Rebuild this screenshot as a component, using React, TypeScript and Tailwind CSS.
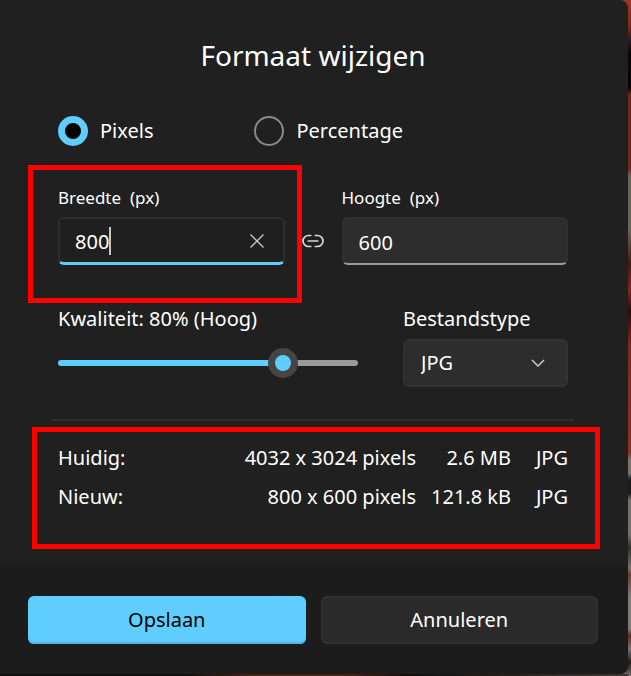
import { useState, type CSSProperties } from "react";

type Unit = "pixels" | "percentage";

const rows = [
  { label: "Huidig:", size: "4032 x 3024 pixels", weight: "2.6 MB", type: "JPG" },
  { label: "Nieuw:", size: "800 x 600 pixels", weight: "121.8 kB", type: "JPG" },
];

const QUALITY_MIN = 10;

function UnitRadio({ label, checked, onChange }: { label: string; checked: boolean; onChange: () => void }) {
  return (
    <label className="flex items-center gap-3 text-xl leading-[30px]">
      <input
        type="radio"
        name="unit"
        checked={checked}
        onChange={onChange}
        className="size-[30px] shrink-0 appearance-none rounded-full border-2 border-[#8a8a8a] checked:border-[7px] checked:border-[#60cdff] checked:bg-black"
      />
      {label}
    </label>
  );
}

function LinkIcon() {
  return (
    <svg viewBox="0 0 22 14" className="h-3.5 w-[22px]" fill="none" stroke="#d6d6d6" strokeWidth="1.7" strokeLinecap="round">
      <path d="M8.7 1.5H6.5a5.5 5.5 0 0 0 0 11h2.2" />
      <path d="M13.3 1.5h2.2a5.5 5.5 0 0 1 0 11h-2.2" />
      <path d="M6.2 7h9.6" />
    </svg>
  );
}

export default function App() {
  const [unit, setUnit] = useState<Unit>("pixels");
  const [width, setWidth] = useState("800");
  const [height, setHeight] = useState("600");
  const [quality, setQuality] = useState(80);
  const [fileType, setFileType] = useState("JPG");

  const fill = ((quality - QUALITY_MIN) / (100 - QUALITY_MIN)) * 100;

  return (
    <div className="min-h-screen bg-[linear-gradient(#a03822_0%,#7a2818_4%,#2a1a18_6%,#100404_8%,#0c0000_13%,#6a2a18_14%,#6a2a1c_25%,#6b6452_26%,#6b6452_34%,#4a1810_39%,#7a2a1c_43%,#2a0a08_46%,#7a2a1c_51%,#8a3220_67%,#7a746a_68%,#7a746a_70%,#1c1c1c_71%,#1c1c1c_73%,#77716a_74%,#77716a_79%,#33302e_81%,#77716a_84%,#6e3a30_85%,#807a72_88%,#807a72_93%,#6a281c_94%,#77716a_96%,#201a18_98%,#77716a_100%)] pr-[3px] font-['Noto_Sans','Open_Sans',sans-serif] text-white">
      <div className="bg-[linear-gradient(to_right,#101010_30%,#4a2014_40%,#4a2014_55%,#101010_65%,#3a3634_100%)] bg-[length:100%_2px] bg-bottom bg-no-repeat pb-0.5">
        <form className="overflow-hidden rounded-r-lg bg-[#202020]" onSubmit={(e) => e.preventDefault()}>
          <div className="pt-[37px] pr-[60px] pb-[17px] pl-[58px]">
            <h1 className="text-center text-[28px] leading-9">Formaat wijzigen</h1>

            <div className="mt-[43px] flex gap-[101px]">
              <UnitRadio label="Pixels" checked={unit === "pixels"} onChange={() => setUnit("pixels")} />
              <UnitRadio label="Percentage" checked={unit === "percentage"} onChange={() => setUnit("percentage")} />
            </div>

            <div className="mt-10 flex items-end">
              <div className="relative min-w-0 flex-1">
                <label htmlFor="width" className="block text-[17px] leading-6 whitespace-pre">
                  Breedte  (px)
                </label>
                <div className="mt-[7px] flex h-12 items-center rounded-md border-2 border-b-[3px] border-[#2e2e2e] border-b-[#60cdff] bg-[#1f1f1f] pr-[18px] pl-[15px]">
                  <input
                    id="width"
                    value={width}
                    onChange={(e) => setWidth(e.target.value)}
                    className="h-full field-sizing-content bg-transparent pt-0.5 text-xl caret-transparent outline-none"
                  />
                  <span className="h-7 w-0.5 bg-[#c8c8c8]" />
                  <button type="button" aria-label="Wissen" onClick={() => setWidth("")} className="ml-auto">
                    <svg viewBox="0 0 16 16" className="size-4" fill="none" stroke="#c8c8c8" strokeWidth="1.3">
                      <path d="M1.5 1.5l13 13M14.5 1.5l-13 13" />
                    </svg>
                  </button>
                </div>
                <div className="pointer-events-none absolute -top-[21px] -right-[17px] -bottom-[38px] -left-[30px] border-5 border-[#ff0000]" />
              </div>

              <div className="flex h-12 w-[57px] items-center justify-center">
                <LinkIcon />
              </div>

              <div className="min-w-0 flex-1">
                <label htmlFor="height" className="block text-[17px] leading-6 whitespace-pre">
                  Hoogte  (px)
                </label>
                <input
                  id="height"
                  value={height}
                  onChange={(e) => setHeight(e.target.value)}
                  className="mt-[7px] block h-12 w-full rounded-md border-2 border-[#303030] border-b-[#9a9a9a] bg-[#2d2d2d] pt-0.5 pl-[15px] text-xl outline-none"
                />
              </div>
            </div>

            <div className="mt-10 flex justify-between gap-[45px]">
              <div className="min-w-0 flex-1">
                <label htmlFor="quality" className="block text-xl leading-7">
                  Kwaliteit: {quality}% (Hoog)
                </label>
                <input
                  id="quality"
                  type="range"
                  min={QUALITY_MIN}
                  max={100}
                  value={quality}
                  onChange={(e) => setQuality(Number(e.target.value))}
                  style={{ "--fill": `${fill}%` } as CSSProperties}
                  className="mt-[15px] block h-[30px] w-full appearance-none bg-transparent [&::-webkit-slider-runnable-track]:h-1.5 [&::-webkit-slider-runnable-track]:rounded-full [&::-webkit-slider-runnable-track]:bg-[linear-gradient(to_right,#60cdff_var(--fill),#9a9a9a_var(--fill))] [&::-webkit-slider-thumb]:-mt-3 [&::-webkit-slider-thumb]:size-[30px] [&::-webkit-slider-thumb]:appearance-none [&::-webkit-slider-thumb]:rounded-full [&::-webkit-slider-thumb]:border-[7px] [&::-webkit-slider-thumb]:border-[#454545] [&::-webkit-slider-thumb]:bg-[#60cdff]"
                />
              </div>
              <div className="w-[165px]">
                <label htmlFor="type" className="block text-xl leading-7">
                  Bestandstype
                </label>
                <div className="relative mt-1.5">
                  <select
                    id="type"
                    value={fileType}
                    onChange={(e) => setFileType(e.target.value)}
                    className="block h-12 w-full appearance-none rounded-md border-2 border-[#323232] bg-[#2d2d2d] pl-4 text-xl outline-none"
                  >
                    <option>JPG</option>
                    <option>PNG</option>
                    <option>BMP</option>
                  </select>
                  <svg
                    viewBox="0 0 14 8"
                    className="pointer-events-none absolute top-5 right-[23px] h-2 w-3.5"
                    fill="none"
                    stroke="#c8c8c8"
                    strokeWidth="1.5"
                  >
                    <path d="M1 1l6 6 6-6" />
                  </svg>
                </div>
              </div>
            </div>

            <hr className="-mx-1.5 mt-8 border-t-2 border-[#2f2f2f]" />

            <div className="relative mt-[17px] pb-[33px]">
              <table className="w-full text-xl leading-[39px]">
                <tbody>
                  {rows.map((r) => (
                    <tr key={r.label}>
                      <th scope="row" className="p-0 text-left font-normal">
                        {r.label}
                      </th>
                      <td className="p-0 text-right">{r.size}</td>
                      <td className="w-[95px] p-0 text-right">{r.weight}</td>
                      <td className="w-[57px] p-0 text-right">{r.type}</td>
                    </tr>
                  ))}
                </tbody>
              </table>
              <div className="pointer-events-none absolute -top-[11px] -right-8 bottom-0 -left-[26px] border-5 border-[#ff0000]" />
            </div>
          </div>

          <div className="grid grid-cols-2 gap-[15px] bg-[#1c1c1c] pt-[30px] pr-[30px] pb-[30px] pl-7 text-xl">
            <button
              type="submit"
              className="h-12 rounded-md bg-[#60cdff] text-black shadow-[inset_0_-2px_0_#56b4e0]"
            >
              Opslaan
            </button>
            <button type="button" className="h-12 rounded-md border-2 border-[#303030] bg-[#2a2a2a]">
              Annuleren
            </button>
          </div>
        </form>
      </div>
    </div>
  );
}
